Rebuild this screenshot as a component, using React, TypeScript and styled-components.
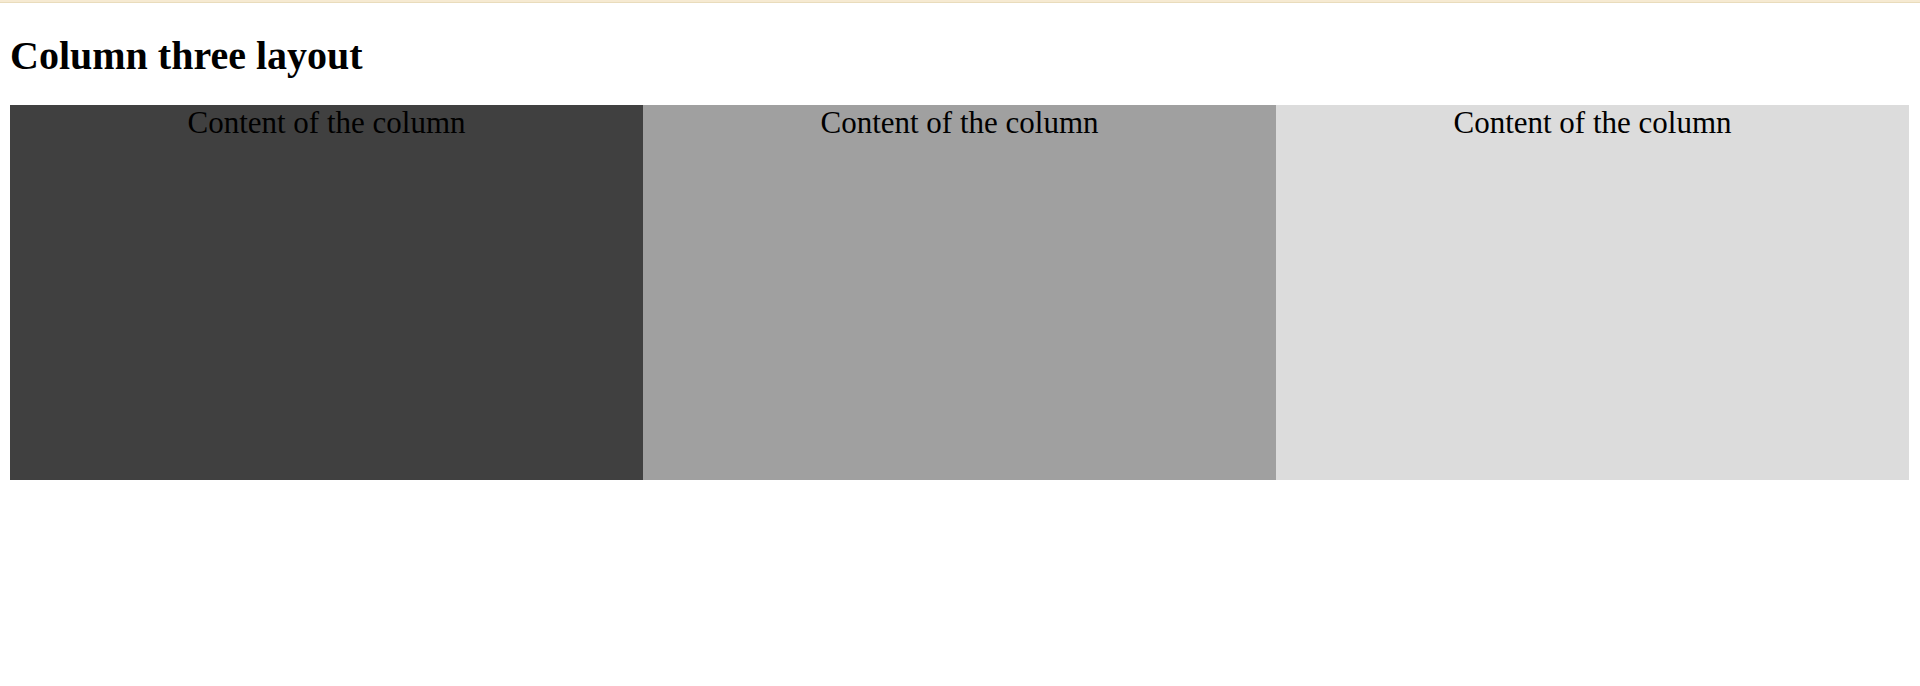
import React from "react";
import styled, { createGlobalStyle } from "styled-components";

const GlobalStyle = createGlobalStyle`
  html, body {
    margin: 0;
    padding: 0;
    background: #ffffff;
  }
  body {
    font-family: "Liberation Serif", "Times New Roman", serif;
    color: #000000;
  }
`;

const TopStrip = styled.div`
  height: 2px;
  background: #f6ead2;
  border-bottom: 1px solid #e9dcbc;
`;

const Page = styled.div`
  padding: 0 11px 0 10px;
`;

const Title = styled.h1`
  font-size: 40px;
  line-height: 46px;
  font-weight: bold;
  margin: 30px 0 26px;
`;

const Columns = styled.div`
  display: grid;
  grid-template-columns: repeat(3, 1fr);
  height: 375px;
`;

const Column = styled.div<{ $bg: string }>`
  background: ${(p) => p.$bg};
  text-align: center;
  font-size: 31px;
  line-height: normal;
`;

const shades = ["#404040", "#a0a0a0", "#dcdcdc"];

export default function App() {
  return (
    <>
      <GlobalStyle />
      <TopStrip />
      <Page>
        <Title>Column three layout</Title>
        <Columns>
          {shades.map((bg) => (
            <Column key={bg} $bg={bg}>
              Content of the column
            </Column>
          ))}
        </Columns>
      </Page>
    </>
  );
}
